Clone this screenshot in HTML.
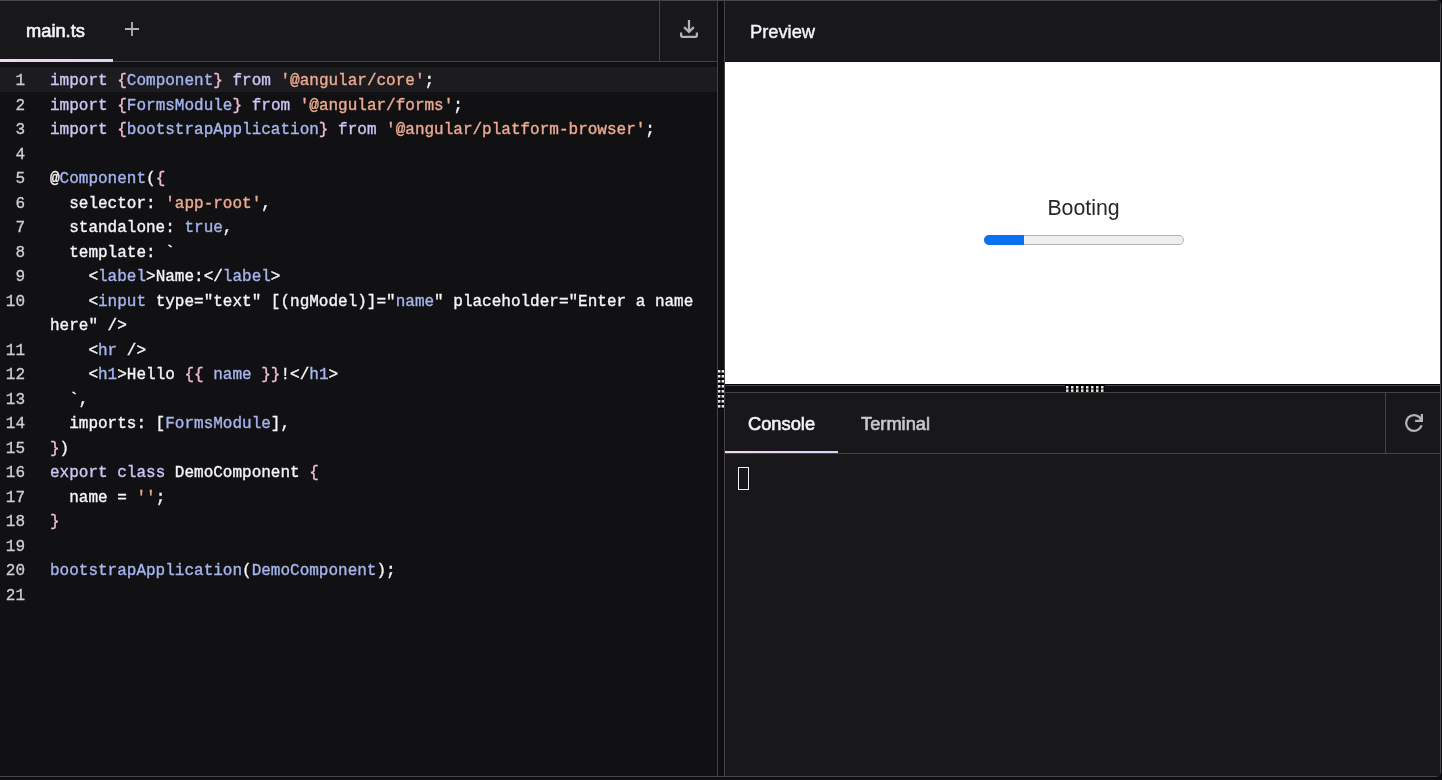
<!DOCTYPE html>
<html><head><meta charset="utf-8">
<style>
*{margin:0;padding:0;box-sizing:border-box}
html,body{width:1442px;height:780px;overflow:hidden;background:#0e0e10}
body{position:relative;font-family:"Liberation Sans",sans-serif;-webkit-font-smoothing:antialiased}
.abs{position:absolute}
#frame{position:absolute;left:-6px;top:0;width:1447px;height:777px;border:1px solid #47474a;border-radius:5px;background:#111113}
#tabbar{position:absolute;left:0;top:1px;width:717px;height:61px;background:#18181b;border-bottom:1px solid #434345}
.ui{position:absolute;will-change:transform;font-size:18.3px;line-height:20px;white-space:nowrap}
#tabbar .tab{left:26px;top:19.5px;color:#f5f5f7;-webkit-text-stroke:0.6px #f5f5f7}
#tabbar .ul{position:absolute;left:0;top:58px;width:113px;height:3px;background:linear-gradient(90deg,#f4d6ee,#ddd0f7)}
#tabbar .sep{position:absolute;left:659px;top:0;width:1px;height:60px;background:#434345}
#plus{position:absolute;left:125px;top:22px}
#dl{position:absolute;left:680px;top:20px}
.hl{position:absolute;left:0;top:67px;width:717px;height:24.5px;background:#1c1c20}
.ln{position:absolute;will-change:transform;-webkit-text-stroke:0.3px currentColor;left:0;width:25px;text-align:right;font-family:"Liberation Mono",monospace;font-size:16px;color:#cfcfd4;line-height:24.5px;white-space:pre}
.cl{position:absolute;will-change:transform;-webkit-text-stroke:0.35px currentColor;left:49.6px;font-family:"Liberation Mono",monospace;font-size:16px;color:#f6f6f8;line-height:24.5px;white-space:pre}
.k{color:#d0c4f6}
.p{color:#f0bcd8}
.t{color:#a6b5ee}
.s{color:#eeab92}
#vdiv{position:absolute;left:717px;top:1px;width:8px;height:775px;background:#0f0f11;border-left:1px solid #434345;border-right:1px solid #434345}
#prevhdr{position:absolute;left:725px;top:1px;width:715px;height:61px;background:#18181b;border-bottom:1px solid #111113}
#prevhdr .title{left:25px;top:21px;color:#f5f5f7;-webkit-text-stroke:0.4px #f5f5f7}
#iframe{position:absolute;left:725px;top:62px;width:715px;height:322px;background:#fff}
#booting{position:absolute;will-change:transform;left:1px;width:100%;top:134px;text-align:center;font-size:21.3px;color:#262626}
#bar{position:absolute;left:259px;top:173px;width:200px;height:10px;border-radius:5px;background:#efefef;border:1px solid #b4b4b4}
#barf{position:absolute;left:259px;top:173px;width:40px;height:10px;border-radius:5px 0 0 5px;background:#0b70f2}
#hdiv{position:absolute;left:725px;top:384px;width:715px;height:8px;background:#0f0f11;border-top:1px solid #050506;box-shadow:inset 0 1px 0 #434345}
#contabs{position:absolute;left:725px;top:392px;width:715px;height:62px;background:#18181b;border-top:1px solid #434345;border-bottom:1px solid #434345}
#contabs .c1{left:23px;top:21px;color:#f5f5f7;-webkit-text-stroke:0.6px #f5f5f7}
#contabs .c2{left:136px;top:21px;color:#c9c9cd;-webkit-text-stroke:0.6px #c9c9cd}
#contabs .ul{position:absolute;left:0;top:58px;width:113px;height:2px;background:linear-gradient(90deg,#f4d6ee,#ddd0f7)}
#contabs .sep{position:absolute;left:660px;top:0;width:1px;height:60px;background:#434345}
#refresh{position:absolute;left:1405px;top:414px}
#console{position:absolute;left:725px;top:454px;width:715px;height:322px;background:#18181b}
#cursor{position:absolute;left:13px;top:13px;width:11px;height:23px;border:1px solid #f0f0f0}
#rb{position:absolute;left:1440px;top:0;width:1px;height:777px;background:#47474a}
</style></head>
<body>
<div id="frame"></div>
<div id="tabbar">
  <div class="ui tab">main.ts</div>
  <div class="ul"></div>
  <div class="sep"></div>
</div>
<svg id="plus" width="14" height="14" viewBox="0 0 14 14"><path d="M7 0V14M0 7H14" stroke="#b4b4b6" stroke-width="1.8"/></svg>
<svg id="dl" width="18" height="18" viewBox="160 -800 640 640"><path fill="#b4b4b8" d="M480-320 280-520l56-58 104 104v-326h80v326l104-104 56 58-200 200ZM240-160q-33 0-56.5-23.5T160-240v-120h80v120h480v-120h80v120q0 33-23.5 56.5T720-160H240Z"/></svg>
<div class="hl"></div>
<div class="ln" style="top:69.0px">1</div>
<div class="cl" style="top:69.0px"><span class="k">import</span> <span class="p">{</span><span class="t">Component</span><span class="p">}</span> <span class="k">from</span> <span class="s">&#x27;@angular/core&#x27;</span>;</div>
<div class="ln" style="top:93.5px">2</div>
<div class="cl" style="top:93.5px"><span class="k">import</span> <span class="p">{</span><span class="t">FormsModule</span><span class="p">}</span> <span class="k">from</span> <span class="s">&#x27;@angular/forms&#x27;</span>;</div>
<div class="ln" style="top:118.0px">3</div>
<div class="cl" style="top:118.0px"><span class="k">import</span> <span class="p">{</span><span class="t">bootstrapApplication</span><span class="p">}</span> <span class="k">from</span> <span class="s">&#x27;@angular/platform-browser&#x27;</span>;</div>
<div class="ln" style="top:142.5px">4</div>
<div class="cl" style="top:142.5px"></div>
<div class="ln" style="top:167.0px">5</div>
<div class="cl" style="top:167.0px">@<span class="t">Component</span>(<span class="p">{</span></div>
<div class="ln" style="top:191.5px">6</div>
<div class="cl" style="top:191.5px">  selector: <span class="s">&#x27;app-root&#x27;</span>,</div>
<div class="ln" style="top:216.0px">7</div>
<div class="cl" style="top:216.0px">  standalone: <span class="t">true</span>,</div>
<div class="ln" style="top:240.5px">8</div>
<div class="cl" style="top:240.5px">  template: `</div>
<div class="ln" style="top:265.0px">9</div>
<div class="cl" style="top:265.0px">    &lt;<span class="t">label</span>&gt;Name:&lt;/<span class="t">label</span>&gt;</div>
<div class="ln" style="top:289.5px">10</div>
<div class="cl" style="top:289.5px">    &lt;<span class="t">input</span> type=&quot;text&quot; [(ngModel)]=&quot;<span class="t">name</span>&quot; placeholder=&quot;Enter a name</div>
<div class="cl" style="top:314.0px">here&quot; /&gt;</div>
<div class="ln" style="top:338.5px">11</div>
<div class="cl" style="top:338.5px">    &lt;<span class="t">hr</span> /&gt;</div>
<div class="ln" style="top:363.0px">12</div>
<div class="cl" style="top:363.0px">    &lt;<span class="t">h1</span>&gt;Hello <span class="p">{{</span> <span class="t">name</span> <span class="p">}}</span>!&lt;/<span class="t">h1</span>&gt;</div>
<div class="ln" style="top:387.5px">13</div>
<div class="cl" style="top:387.5px">  `,</div>
<div class="ln" style="top:412.0px">14</div>
<div class="cl" style="top:412.0px">  imports: [<span class="t">FormsModule</span>],</div>
<div class="ln" style="top:436.5px">15</div>
<div class="cl" style="top:436.5px"><span class="p">}</span>)</div>
<div class="ln" style="top:461.0px">16</div>
<div class="cl" style="top:461.0px"><span class="k">export</span> <span class="k">class</span> DemoComponent <span class="p">{</span></div>
<div class="ln" style="top:485.5px">17</div>
<div class="cl" style="top:485.5px">  name = <span class="s">&#x27;&#x27;</span>;</div>
<div class="ln" style="top:510.0px">18</div>
<div class="cl" style="top:510.0px"><span class="p">}</span></div>
<div class="ln" style="top:534.5px">19</div>
<div class="cl" style="top:534.5px"></div>
<div class="ln" style="top:559.0px">20</div>
<div class="cl" style="top:559.0px"><span class="t">bootstrapApplication</span>(<span class="t">DemoComponent</span>);</div>
<div class="ln" style="top:583.5px">21</div>
<div class="cl" style="top:583.5px"></div>
<div id="vdiv"></div>
<svg id="vh" style="position:absolute;left:718px;top:369px" width="6" height="40" viewBox="0 0 6 40"><rect width="6" height="40" fill="#000"/><g fill="#5c5c5e"><rect x="2" y="1" width="2" height="2.6"/><rect x="2" y="6" width="2" height="2.6"/><rect x="2" y="11" width="2" height="2.6"/><rect x="2" y="16" width="2" height="2.6"/><rect x="2" y="21" width="2" height="2.6"/><rect x="2" y="26" width="2" height="2.6"/><rect x="2" y="31" width="2" height="2.6"/><rect x="2" y="36" width="2" height="2.6"/></g><g fill="#e6e6e8"><rect x="0" y="1" width="2" height="2.6"/><rect x="4" y="1" width="2" height="2.6"/><rect x="0" y="6" width="2" height="2.6"/><rect x="4" y="6" width="2" height="2.6"/><rect x="0" y="11" width="2" height="2.6"/><rect x="4" y="11" width="2" height="2.6"/><rect x="0" y="16" width="2" height="2.6"/><rect x="4" y="16" width="2" height="2.6"/><rect x="0" y="21" width="2" height="2.6"/><rect x="4" y="21" width="2" height="2.6"/><rect x="0" y="26" width="2" height="2.6"/><rect x="4" y="26" width="2" height="2.6"/><rect x="0" y="31" width="2" height="2.6"/><rect x="4" y="31" width="2" height="2.6"/><rect x="0" y="36" width="2" height="2.6"/><rect x="4" y="36" width="2" height="2.6"/></g></svg>
<div id="prevhdr"><div class="ui title">Preview</div></div>
<div id="iframe">
  <div id="booting">Booting</div>
  <div id="bar"></div><div id="barf"></div>
</div>
<div id="hdiv"></div>
<svg id="hh" style="position:absolute;left:1065px;top:385px" width="40" height="7" viewBox="0 0 40 7"><rect width="40" height="7" fill="#000"/><g fill="#5c5c5e"><rect x="1" y="3" width="2.5" height="1.5"/><rect x="6" y="3" width="2.5" height="1.5"/><rect x="11" y="3" width="2.5" height="1.5"/><rect x="16" y="3" width="2.5" height="1.5"/><rect x="21" y="3" width="2.5" height="1.5"/><rect x="26" y="3" width="2.5" height="1.5"/><rect x="31" y="3" width="2.5" height="1.5"/><rect x="36" y="3" width="2.5" height="1.5"/></g><g fill="#e6e6e8"><rect x="1" y="1" width="2.5" height="2.2"/><rect x="6" y="1" width="2.5" height="2.2"/><rect x="11" y="1" width="2.5" height="2.2"/><rect x="16" y="1" width="2.5" height="2.2"/><rect x="21" y="1" width="2.5" height="2.2"/><rect x="26" y="1" width="2.5" height="2.2"/><rect x="31" y="1" width="2.5" height="2.2"/><rect x="36" y="1" width="2.5" height="2.2"/><rect x="1" y="4.5" width="2.5" height="2.4"/><rect x="6" y="4.5" width="2.5" height="2.4"/><rect x="11" y="4.5" width="2.5" height="2.4"/><rect x="16" y="4.5" width="2.5" height="2.4"/><rect x="21" y="4.5" width="2.5" height="2.4"/><rect x="26" y="4.5" width="2.5" height="2.4"/><rect x="31" y="4.5" width="2.5" height="2.4"/><rect x="36" y="4.5" width="2.5" height="2.4"/></g></svg>
<div id="contabs">
  <div class="ui c1">Console</div>
  <div class="ui c2">Terminal</div>
  <div class="ul"></div>
  <div class="sep"></div>
</div>
<svg id="refresh" width="18" height="18" viewBox="160 -800 640 640"><path fill="#b4b4b8" d="M480-160q-134 0-227-93t-93-227q0-134 93-227t227-93q69 0 132 28.5T720-690v-110h80v280H520v-80h168q-32-56-87.5-88T480-720q-100 0-170 70t-70 170q0 100 70 170t170 70q77 0 139-44t87-116h84q-28 106-114 173t-196 67Z"/></svg>
<div id="console"><div id="cursor"></div></div>
</body></html>
